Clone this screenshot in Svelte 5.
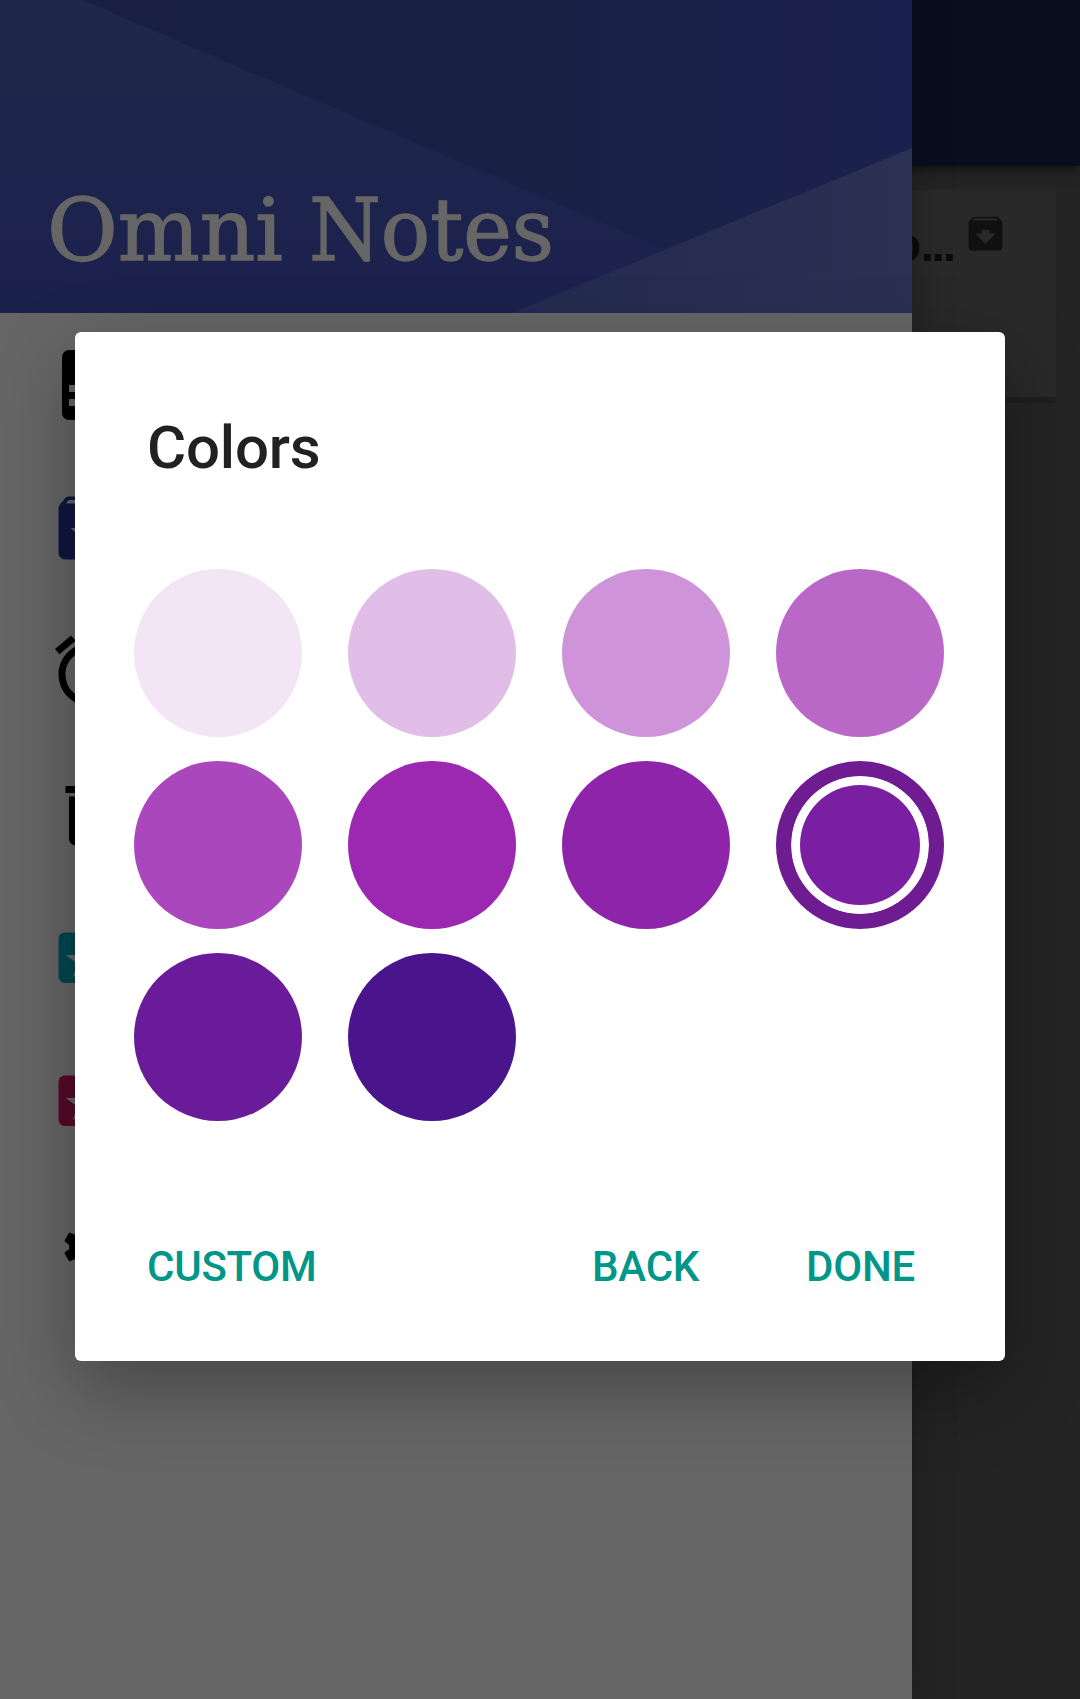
<script>
  const swatches = [
    '#f3e5f5', '#e1bee7', '#ce93d8', '#ba68c8',
    '#ab47bc', '#9c27b0', '#8e24aa', '#7b1fa2',
    '#6a1b9a', '#4a148c'
  ];
  let selected = $state(7);
  const archive =
    'M20.54 5.23l-1.39-1.68C18.88 3.21 18.47 3 18 3H6c-.47 0-.88.21-1.16.55L3.46 5.23C3.17 5.57 3 6.02 3 6.5V19c0 1.1.9 2 2 2h14c1.1 0 2-.9 2-2V6.5c0-.48-.17-.93-.46-1.27zM12 17.5L6.5 12H10v-2h4v2h3.5L12 17.5zM5.12 5l.81-1h12l.94 1H5.12z';
  const star =
    'M12 6.6l1.22 3.74h3.94l-3.19 2.32 1.22 3.74L12 14.09 8.81 16.4l1.22-3.74-3.19-2.32h3.94z';
</script>

<div class="screen">
  <div class="page">
    <div class="appbar"></div>
    <div class="note">
      <span class="note-title">o<span class="dots">...</span></span>
      <svg class="note-icon" viewBox="0 0 24 24"><path d={archive} /></svg>
    </div>
  </div>

  <aside class="drawer">
    <header>
      <svg class="art" viewBox="0 0 912 313" preserveAspectRatio="none">
        <defs>
          <linearGradient id="base" x1="0" y1="0" x2="0" y2="1">
            <stop offset="0" stop-color="#1f274b" />
            <stop offset="1" stop-color="#1b214d" />
          </linearGradient>
          <linearGradient id="fold" x1="0" y1="0" x2="1" y2="0">
            <stop offset="0" stop-color="#181f43" />
            <stop offset=".7" stop-color="#1a2148" />
            <stop offset="1" stop-color="#1b214e" />
          </linearGradient>
          <linearGradient id="corner" x1="0" y1="0" x2="1" y2="0">
            <stop offset="0" stop-color="#232a50" />
            <stop offset="1" stop-color="#2b3153" />
          </linearGradient>
        </defs>
        <rect width="912" height="313" fill="url(#base)" />
        <path d="M82 0H912V149L664 249Z" fill="url(#fold)" />
        <path d="M512 313L912 148V313Z" fill="url(#corner)" />
        <text class="brand" x="47" y="260" textLength="236" lengthAdjust="spacingAndGlyphs">Omni</text>
        <text class="brand" x="309" y="260" textLength="245" lengthAdjust="spacingAndGlyphs">Notes</text>
      </svg>
    </header>
    <nav>
      <svg viewBox="0 0 24 24"><path d="M6 2h8l6 6v12a2 2 0 0 1-2 2H6a2 2 0 0 1-2-2V4a2 2 0 0 1 2-2zm0 10v2h12v-2zm0 4v2h12v-2z" /></svg>
      <svg viewBox="0 0 24 24" class="blue"><path d={archive} /></svg>
      <svg viewBox="0 0 24 24"><path d="M22 5.72l-4.6-3.86-1.29 1.53 4.6 3.86L22 5.72zM7.88 3.39L6.6 1.86 2 5.71l1.29 1.53 4.59-3.85zM12.5 8H11v6l4.75 2.85.75-1.23-4-2.37V8zM12 4c-4.97 0-9 4.03-9 9s4.02 9 9 9a9 9 0 0 0 0-18zm0 16c-3.87 0-7-3.13-7-7s3.13-7 7-7 7 3.13 7 7-3.13 7-7 7z" /></svg>
      <svg viewBox="0 0 24 24"><path d="M6 19c0 1.1.9 2 2 2h8c1.1 0 2-.9 2-2V7H6v12zM19 4h-3.500l-1-1h-5l-1 1H5v2h14V4z" /></svg>
      <svg viewBox="0 0 24 24" class="teal"><rect x="3" y="5" width="14.500" height="14.400" rx="1.800" /><path class="star" d={star} transform="translate(-2.050 .68) scale(1.040)" /></svg>
      <svg viewBox="0 0 24 24" class="pink"><rect x="3" y="5" width="14.500" height="14.400" rx="1.800" /><path class="star" d={star} transform="translate(-2.050 .68) scale(1.040)" /></svg>
      <svg viewBox="0 0 24 24"><path transform="translate(3.400 6.100) scale(.585)" d="M19.430 12.980c.04-.32.07-.64.07-.98s-.03-.66-.07-.98l2.110-1.650c.19-.15.24-.42.12-.64l-2-3.460c-.12-.22-.39-.3-.61-.22l-2.490 1c-.52-.4-1.080-.73-1.690-.98l-.38-2.650C14.460 2.180 14.250 2 14 2h-4c-.25 0-.46.18-.49.42l-.38 2.650c-.61.25-1.170.59-1.690.98l-2.490-1c-.23-.09-.49 0-.61.22l-2 3.460c-.13.22-.07.49.12.64l2.110 1.650c-.04.32-.07.65-.07.98s.03.66.07.98l-2.110 1.650c-.19.15-.24.42-.12.64l2 3.460c.12.22.39.3.61.22l2.490-1c.52.4 1.080.73 1.690.98l.38 2.650c.03.24.24.42.49.42h4c.25 0 .46-.18.49-.42l.38-2.650c.61-.25 1.170-.59 1.690-.98l2.490 1c.23.09.49 0 .61-.22l2-3.460c.12-.22.07-.49-.12-.64z" /></svg>
    </nav>
  </aside>

  <div class="dialog">
    <h2>Colors</h2>
    <div class="grid">
      {#each swatches as color, i}
        <button
          class="swatch"
          class:selected={i === selected}
          style:--c={color}
          aria-label={color}
          onclick={() => (selected = i)}
        ></button>
      {/each}
    </div>
    <div class="actions">
      <button class="custom">CUSTOM</button>
      <button class="back">BACK</button>
      <button>DONE</button>
    </div>
  </div>
</div>

<style>
  :global(body) { margin: 0; background: #232323; }
  .screen {
    position: relative;
    width: 1080px;
    height: 1699px;
    overflow: hidden;
    background: #242424;
    font-family: Roboto, sans-serif;
  }
  h2 { margin: 0; }
  button { border: 0; padding: 0; background: none; font: inherit; letter-spacing: inherit; }
  .appbar {
    height: 166px;
    background: #0a0d1d;
    box-shadow: 0 2px 12px rgba(0, 0, 0, .65);
  }
  .note {
    box-sizing: border-box;
    width: 1034px;
    height: 207px;
    margin: 24px 0 0 22px;
    padding: 21px 48px 0 0;
    display: flex;
    justify-content: flex-end;
    align-items: flex-start;
    background: #292929;
    box-shadow: 0 6px 0 #1f1f1f;
  }
  .note-title {
    margin: 6px 9px 0 0;
    font-size: 48px;
    line-height: 56px;
    font-weight: 700;
    color: #0b0b0b;
  }
  .dots {
    font-family: "Liberation Sans", sans-serif;
    font-size: 47px;
    line-height: 1;
    letter-spacing: -2px;
  }
  .note-icon { width: 45px; height: 45px; fill: #101010; }
  .drawer {
    position: absolute;
    inset: 0 auto 0 0;
    width: 912px;
    background: #666;
    box-shadow: 0 0 40px rgba(0, 0, 0, .25);
  }
  header { height: 313px; }
  .art { display: block; width: 912px; height: 313px; }
  .brand {
    font: 400 86px "DejaVu Serif", serif;
    fill: #666;
    stroke: #666;
    stroke-width: 1.4px;
  }
  nav {
    display: flex;
    flex-direction: column;
    gap: 59px;
    padding: 30px 0 0 48px;
  }
  nav svg { width: 84px; height: 84px; fill: #000; }
  nav .blue { fill: #101641; }
  nav .teal { fill: #00474f; }
  nav .pink { fill: #570a28; }
  nav .star { fill: #666; }
  .dialog {
    position: absolute;
    left: 75px;
    top: 332px;
    box-sizing: border-box;
    width: 930px;
    height: 1029px;
    padding: 81px 59px 0;
    border-radius: 6px;
    background: #fff;
    box-shadow: 0 28px 80px rgba(0, 0, 0, .32);
  }
  h2 {
    padding-left: 13px;
    font-size: 60px;
    line-height: 70px;
    font-weight: 500;
    letter-spacing: -.2px;
    color: #212121;
  }
  .grid {
    display: grid;
    grid-template-columns: repeat(4, 168px);
    gap: 24px 46px;
    margin-top: 86px;
  }
  .swatch {
    width: 168px;
    height: 168px;
    border-radius: 50%;
    background: var(--c);
  }
  .selected {
    box-sizing: border-box;
    border: 15px solid #6f1c92;
    background: var(--c);
    box-shadow: inset 0 0 0 9px #fff;
  }
  .actions {
    display: flex;
    margin: 121px 31px 0 13px;
    font-size: 42px;
    line-height: 50px;
    font-weight: 500;
    letter-spacing: -.25px;
    color: #009688;
  }
  .actions button { color: inherit; }
  .custom { margin-right: auto; }
  .back { margin-right: 107px; }
</style>
